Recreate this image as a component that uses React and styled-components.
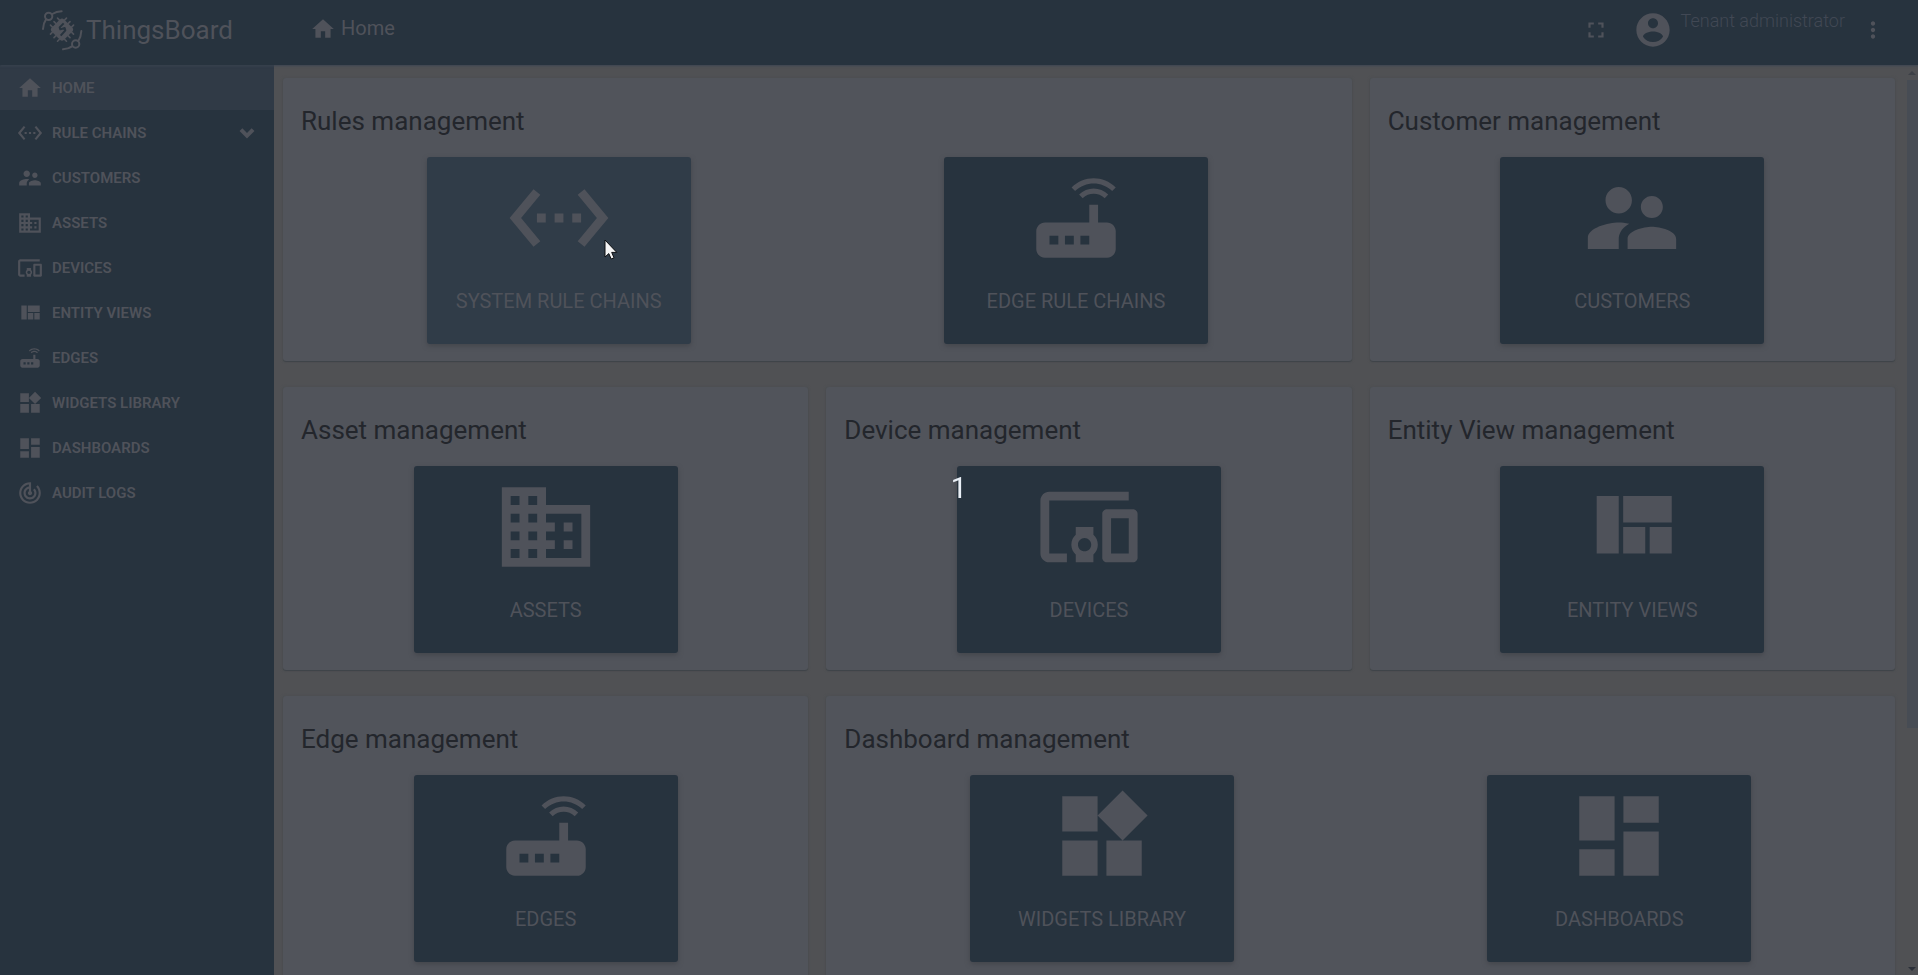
import React from "react";
import styled, { createGlobalStyle, css } from "styled-components";

const color = {
  navy: "#27333e",
  navyActive: "#303a46",
  navyHover: "#303c48",
  page: "#505154",
  card: "#51545b",
  ink: "#23262c",
  onNavy: "#4f525a",
  onNavyDim: "#414854",
  thumb: "#474c54",
};

const GlobalStyle = createGlobalStyle`
  *, *::before, *::after { box-sizing: border-box; }
  body {
    margin: 0;
    background: ${color.page};
    font-family: Roboto, "Liberation Sans", sans-serif;
    overflow: hidden;
  }
`;

/* ---------- icons ---------- */

const paths = {
  home: "M10 20v-6h4v6h5v-8h3L12 3 2 12h3v8z",
  chains:
    "M7.77 6.76L6.23 5.48.82 12l5.41 6.52 1.54-1.28L3.42 12l4.35-5.24zM7 13h2v-2H7v2zm10-2h-2v2h2v-2zm-6 2h2v-2h-2v2zm6.77-7.52l-1.54 1.28L20.58 12l-4.35 5.24 1.54 1.28L23.18 12l-5.41-6.52z",
  customers:
    "M16.5 12c1.38 0 2.49-1.12 2.49-2.5S17.88 7 16.5 7C15.12 7 14 8.12 14 9.5s1.12 2.5 2.5 2.5zM9 11c1.66 0 2.99-1.34 2.99-3S10.66 5 9 5C7.34 5 6 6.34 6 8s1.34 3 3 3zm7.5 3c-1.83 0-5.5.92-5.5 2.75V19h11v-2.25c0-1.83-3.67-2.75-5.5-2.75zM9 13c-2.33 0-7 1.17-7 3.5V19h7v-2.25c0-.85.33-2.34 2.37-3.47C10.5 13.1 9.66 13 9 13z",
  assets:
    "M12 7V3H2v18h20V7H12zM6 19H4v-2h2v2zm0-4H4v-2h2v2zm0-4H4V9h2v2zm0-4H4V5h2v2zm4 12H8v-2h2v2zm0-4H8v-2h2v2zm0-4H8V9h2v2zm0-4H8V5h2v2zm10 12h-8v-2h2v-2h-2v-2h2v-2h-2V9h8v10zm-2-8h-2v2h2v-2zm0 4h-2v2h2v-2z",
  devices:
    "M3 6h18V4H3c-1.1 0-2 .9-2 2v12c0 1.1.9 2 2 2h4v-2H3V6zm10 6H9v1.78c-.61.55-1 1.33-1 2.22s.39 1.67 1 2.22V20h4v-1.78c.61-.55 1-1.34 1-2.22s-.39-1.67-1-2.22V12zm-2 5.5c-.83 0-1.5-.67-1.5-1.5s.67-1.5 1.5-1.5 1.5.67 1.5 1.5-.67 1.5-1.5 1.5zM22 8h-6c-.5 0-1 .5-1 1v10c0 .5.5 1 1 1h6c.5 0 1-.5 1-1V9c0-.5-.5-1-1-1zm-1 10h-4v-8h4v8z",
  views: "M10 18h5v-6h-5v6zm-6 0h5V5H4v13zm12 0h5v-6h-5v6zM10 5v6h11V5H10z",
  edges:
    "M20.2 5.9l.8-.8C19.6 3.7 17.8 3 16 3s-3.6.7-5 2.1l.8.8C13 4.8 14.5 4.2 16 4.2s3 .6 4.2 1.7zm-.9.8c-.9-.9-2.1-1.4-3.3-1.4s-2.4.5-3.3 1.4l.8.8c.7-.7 1.6-1 2.5-1 .9 0 1.8.3 2.5 1l.8-.8zM19 13h-2V9h-2v4H5c-1.1 0-2 .9-2 2v4c0 1.1.9 2 2 2h14c1.1 0 2-.9 2-2v-4c0-1.1-.9-2-2-2zM8 18H6v-2h2v2zm3.5 0h-2v-2h2v2zm3.5 0h-2v-2h2v2z",
  widgets:
    "M13 13v8h8v-8h-8zM3 21h8v-8H3v8zM3 3v8h8V3H3zm13.66-1.31L11 7.34 16.66 13l5.66-5.66-5.66-5.65z",
  dashboards: "M3 13h8V3H3v10zm0 8h8v-6H3v6zm10 0h8V11h-8v10zm0-18v6h8V3h-8z",
  audit:
    "M19.07 4.93l-1.41 1.41C19.1 7.79 20 9.79 20 12c0 4.42-3.58 8-8 8s-8-3.58-8-8c0-4.08 3.05-7.44 7-7.93v2.02C8.16 6.57 6 9.03 6 12c0 3.31 2.69 6 6 6s6-2.69 6-6c0-1.66-.67-3.16-1.76-4.24l-1.41 1.41C15.55 9.9 16 10.9 16 12c0 2.21-1.79 4-4 4s-4-1.79-4-4c0-1.86 1.28-3.41 3-3.86v2.14c-.6.35-1 .98-1 1.72 0 1.1.9 2 2 2s2-.9 2-2c0-.74-.4-1.38-1-1.72V2h-1C6.48 2 2 6.48 2 12s4.48 10 10 10 10-4.48 10-10c0-2.76-1.12-5.26-2.93-7.07z",
  down: "M7.7 7.6L12 11.9l4.3-4.3L18.9 10.2 12 17.1 5.1 10.2z",
  fullscreen: "M7 14H5v5h5v-2H7v-3zm-2-4h2V7h3V5H5v5zm12 7h-3v2h5v-5h-2v3zM14 5v2h3v3h2V5h-5z",
  account:
    "M12 2C6.48 2 2 6.48 2 12s4.48 10 10 10 10-4.48 10-10S17.52 2 12 2zm0 3c1.66 0 3 1.34 3 3s-1.34 3-3 3-3-1.34-3-3 1.34-3 3-3zm0 14.2c-2.5 0-4.71-1.28-6-3.22.03-1.99 4-3.08 6-3.08 1.99 0 5.97 1.09 6 3.08-1.29 1.94-3.5 3.22-6 3.22z",
  more: "M12 8c1.1 0 2-.9 2-2s-.9-2-2-2-2 .9-2 2 .9 2 2 2zm0 2c-1.1 0-2 .9-2 2s.9 2 2 2 2-.9 2-2-.9-2-2-2zm0 6c-1.1 0-2 .9-2 2s.9 2 2 2 2-.9 2-2-.9-2-2-2z",
};

const Glyph = styled.svg`
  display: block;
  flex: none;
  width: ${(p) => p.$size}px;
  height: ${(p) => p.$size}px;
  fill: currentColor;
`;

const Icon = ({ name, size = 26 }) => (
  <Glyph $size={size} viewBox="0 0 24 24" aria-hidden="true">
    <path d={paths[name]} />
  </Glyph>
);

const LogoMark = () => (
  <svg width="42" height="42" viewBox="0 0 126 126" fill="none" aria-hidden="true">
    <g stroke="currentColor" strokeWidth="6" strokeLinecap="round">
      <circle cx="23" cy="22" r="11" />
      <path d="M34 15Q46 7 62 7M15 31Q7 42 6 60" />
      <circle cx="104" cy="105" r="11" />
      <path d="M112 96Q120 84 121 66M93 112Q82 120 66 121" />
    </g>
    <g transform="translate(63 62) rotate(45)">
      <path
        d="M-15-34V34M0-34V34M15-34V34M-34-15H34M-34 0H34M-34 15H34"
        stroke="currentColor"
        strokeWidth="5"
        strokeLinecap="round"
      />
      <rect x="-26" y="-26" width="52" height="52" rx="9" fill="currentColor" />
    </g>
    <path
      d="M68 43L56 55L58 61L71 57L73 64L59 80"
      stroke={color.navy}
      strokeWidth="6"
      strokeLinejoin="round"
    />
  </svg>
);

/* ---------- frame ---------- */

const Shell = styled.div`
  display: flex;
  flex-direction: column;
  height: 100vh;
  background: ${color.page};
`;

const TopBar = styled.header`
  display: flex;
  flex: none;
  height: 65px;
  background: ${color.navy};
  color: ${color.onNavy};
  box-shadow: 0 1px 2px #3d4652;
  z-index: 1;
`;

const Brand = styled.a`
  display: flex;
  align-items: center;
  gap: 3px;
  width: 274px;
  height: 60px;
  padding-left: 41px;
  color: inherit;
  text-decoration: none;
  font-size: 26px;
  line-height: 32px;
`;

const Breadcrumb = styled.h1`
  display: flex;
  align-items: center;
  gap: 5px;
  flex: 1;
  height: 58px;
  margin: 0;
  padding-left: 36px;
  font-size: 20px;
  line-height: 24px;
  font-weight: 400;
`;

const PageName = styled.span`
  padding-bottom: 2px;
`;

const Tools = styled.div`
  display: flex;
  align-items: center;
  height: 59px;
  padding-right: 32px;
`;

const IconButton = styled.button`
  display: flex;
  padding: 0;
  border: 0;
  background: none;
  color: inherit;
  cursor: pointer;
`;

const User = styled.div`
  display: flex;
  align-items: center;
  gap: 8px;
  margin: 0 15px 0 24px;
`;

const UserName = styled.span`
  padding-bottom: 18px;
  color: ${color.onNavyDim};
  font-size: 18px;
  line-height: 24px;
  font-weight: 300;
`;

const Body = styled.div`
  display: flex;
  flex: 1;
  min-height: 0;
`;

/* ---------- side menu ---------- */

const SideNav = styled.nav`
  flex: none;
  width: 274px;
  background: ${color.navy};
`;

const Menu = styled.ul`
  display: flex;
  flex-direction: column;
  gap: 1px;
  margin: 0;
  padding: 1px 0 0;
  list-style: none;
`;

const MenuLink = styled.a`
  display: flex;
  align-items: center;
  gap: 9px;
  height: 44px;
  padding: 0 14px 0 17px;
  color: ${color.onNavy};
  background: ${(p) => (p.$active ? color.navyActive : "transparent")};
  font-size: 15px;
  font-weight: 600;
  text-decoration: none;
  text-transform: uppercase;
`;

const MenuText = styled.span`
  flex: 1;
`;

/* ---------- dashboard cards ---------- */

const Content = styled.main`
  flex: 1;
  min-width: 0;
  overflow: hidden;
  padding: 13px 11px 0 9px;
`;

const CardGrid = styled.div`
  display: grid;
  grid-template-columns: repeat(3, minmax(0, 1fr));
  gap: 26px 18px;
`;

const Card = styled.section`
  grid-column: span ${(p) => p.$span};
  padding: 25px 17px 17px;
  border-radius: 3px;
  background: ${color.card};
  box-shadow: 0 1px 1px #3f4349, 0 0 3px #4b4d51;
`;

const CardTitle = styled.h2`
  margin: 0 0 18px;
  padding-left: 1px;
  color: ${color.ink};
  font-size: 26px;
  line-height: 36px;
  font-weight: 400;
`;

const Tiles = styled.div`
  display: grid;
  grid-auto-flow: column;
  grid-auto-columns: minmax(0, 1fr);
  justify-items: center;
`;

const Tile = styled.button`
  position: relative;
  display: flex;
  flex-direction: column;
  align-items: center;
  gap: 18px;
  width: 264px;
  height: 187px;
  padding: 8px 0 0;
  border: 0;
  border-radius: 3px;
  color: ${color.onNavy};
  background: ${color.navy};
  box-shadow: 0 2px 5px #43464b;
  font-family: inherit;
  font-size: 20px;
  line-height: 24px;
  font-weight: 400;
  text-transform: uppercase;
  cursor: pointer;
  ${(p) =>
    p.$hovered &&
    css`
      background: ${color.navyHover};
    `}
`;

const Pointer = styled.svg`
  position: absolute;
  left: calc(50% + 45px);
  top: 82px;
`;

/* ---------- scroll bar and counter ---------- */

const ScrollTrack = styled.div`
  display: flex;
  flex-direction: column;
  align-items: center;
  flex: none;
  width: 12px;
  padding: 6px 0 4px;
`;

const ScrollThumb = styled.div`
  align-self: stretch;
  flex: 0 1 72%;
  margin: 5px 0 auto 1px;
  background: ${color.thumb};
`;

const Counter = styled.div`
  position: fixed;
  inset: 0;
  z-index: 2;
  display: flex;
  align-items: center;
  justify-content: center;
  color: #e9eff6;
  font-size: 29px;
  line-height: 32px;
  pointer-events: none;
`;

const menu = [
  { icon: "home", label: "Home", active: true },
  { icon: "chains", label: "Rule chains", expandable: true },
  { icon: "customers", label: "Customers" },
  { icon: "assets", label: "Assets" },
  { icon: "devices", label: "Devices" },
  { icon: "views", label: "Entity views" },
  { icon: "edges", label: "Edges" },
  { icon: "widgets", label: "Widgets library" },
  { icon: "dashboards", label: "Dashboards" },
  { icon: "audit", label: "Audit logs" },
];

const cards = [
  {
    title: "Rules management",
    span: 2,
    tiles: [
      { icon: "chains", label: "System rule chains", hovered: true },
      { icon: "edges", label: "Edge rule chains" },
    ],
  },
  { title: "Customer management", tiles: [{ icon: "customers", label: "Customers" }] },
  { title: "Asset management", tiles: [{ icon: "assets", label: "Assets" }] },
  { title: "Device management", tiles: [{ icon: "devices", label: "Devices" }] },
  { title: "Entity View management", tiles: [{ icon: "views", label: "Entity views" }] },
  { title: "Edge management", tiles: [{ icon: "edges", label: "Edges" }] },
  {
    title: "Dashboard management",
    span: 2,
    tiles: [
      { icon: "widgets", label: "Widgets library" },
      { icon: "dashboards", label: "Dashboards" },
    ],
  },
];

export default function App() {
  return (
    <>
      <GlobalStyle />
      <Shell>
        <TopBar>
          <Brand href="#home">
            <LogoMark />
            ThingsBoard
          </Brand>
          <Breadcrumb>
            <Icon name="home" />
            <PageName>Home</PageName>
          </Breadcrumb>
          <Tools>
            <IconButton type="button" aria-label="Fullscreen">
              <Icon name="fullscreen" />
            </IconButton>
            <User>
              <Icon name="account" size={40} />
              <UserName>Tenant administrator</UserName>
            </User>
            <IconButton type="button" aria-label="More">
              <Icon name="more" />
            </IconButton>
          </Tools>
        </TopBar>
        <Body>
          <SideNav>
            <Menu>
              {menu.map((item) => (
                <li key={item.label}>
                  <MenuLink href={`#${item.icon}`} $active={item.active}>
                    <Icon name={item.icon} />
                    <MenuText>{item.label}</MenuText>
                    {item.expandable && <Icon name="down" />}
                  </MenuLink>
                </li>
              ))}
            </Menu>
          </SideNav>
          <Content>
            <CardGrid>
              {cards.map((card) => (
                <Card key={card.title} $span={card.span || 1}>
                  <CardTitle>{card.title}</CardTitle>
                  <Tiles>
                    {card.tiles.map((tile) => (
                      <Tile key={tile.label} type="button" $hovered={tile.hovered}>
                        <Icon name={tile.icon} size={106} />
                        {tile.label}
                        {tile.hovered && (
                          <Pointer width="14" height="21" viewBox="0 0 14 21" aria-hidden="true">
                            <path
                              d="M1 1V18L4.8 14.6L7.2 20L10 18.8L7.7 13.4H12.8Z"
                              fill="#f4f4f4"
                              stroke="#0c0e10"
                            />
                          </Pointer>
                        )}
                      </Tile>
                    ))}
                  </Tiles>
                </Card>
              ))}
            </CardGrid>
          </Content>
          <ScrollTrack aria-hidden="true">
            <svg width="8" height="4" viewBox="0 0 8 4">
              <path d="M0 4L4 0L8 4Z" fill="#3d4147" />
            </svg>
            <ScrollThumb />
            <svg width="8" height="4" viewBox="0 0 8 4">
              <path d="M0 0L4 4L8 0Z" fill="#2b3039" />
            </svg>
          </ScrollTrack>
        </Body>
      </Shell>
      <Counter>1</Counter>
    </>
  );
}
